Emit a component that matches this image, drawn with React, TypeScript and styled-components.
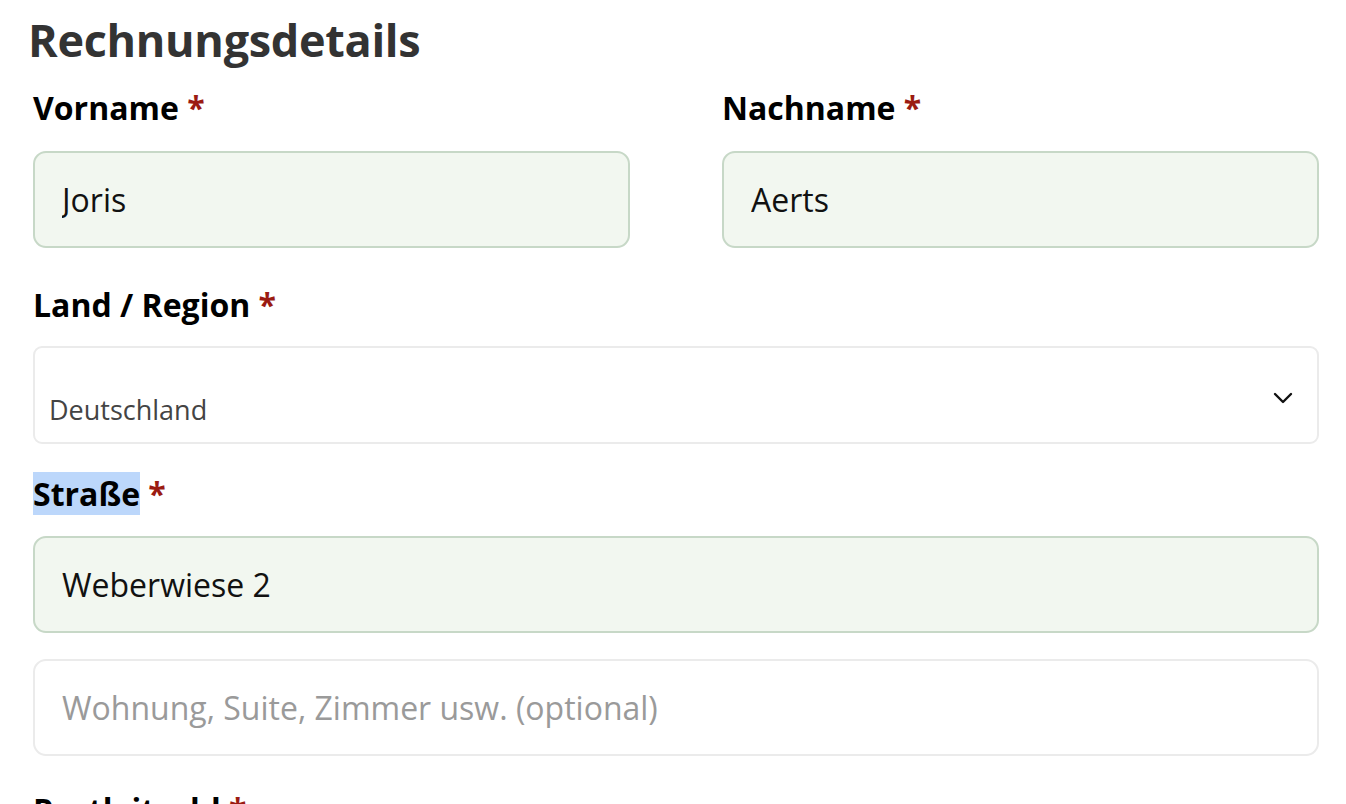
import styled, { createGlobalStyle } from "styled-components";

const GlobalStyle = createGlobalStyle`
    body {
        margin: 0;
        background: #ffffff;
        font-family: "Open Sans", "Noto Sans", sans-serif;
    }
`

const Field = ({ label, space = 0, gap = 21, children }: { label: string; space?: number; gap?: number; children: React.ReactNode }) => (
    <FieldBlock $space={space} $gap={gap}>
        <Label>
            {label} <Required>*</Required>
        </Label>
        {children}
    </FieldBlock>
)

export default function App() {
    return (
        <Page>
            <GlobalStyle />
            <Title>Rechnungsdetails</Title>
            <Row>
                <Field label="Vorname">
                    <TextInput $filled readOnly defaultValue="Joris" />
                </Field>
                <Field label="Nachname">
                    <TextInput $filled readOnly defaultValue="Aerts" />
                </Field>
            </Row>
            <Field label="Land / Region" space={28} gap={19}>
                <SelectBox>
                    <SelectValue>Deutschland</SelectValue>
                    <svg width="20" height="12" viewBox="0 0 20 12" fill="none">
                        <path d="M2 2l8 8 8-8" stroke="#111" strokeWidth="2.4" strokeLinecap="round" strokeLinejoin="round" />
                    </svg>
                </SelectBox>
            </Field>
            <StreetBlock>
                <Label>
                    <Selected>Straße</Selected> <Required>*</Required>
                </Label>
                <TextInput $filled readOnly defaultValue="Weberwiese 2" />
                <TextInput placeholder="Wohnung, Suite, Zimmer usw. (optional)" />
            </StreetBlock>
            <Field label="Postleitzahl">
                <TextInput />
            </Field>
        </Page>
    )
}

const Page = styled.div`
    width: 1286px;
    padding: 9px 0 0 33px;
    display: flex;
    flex-direction: column;
`
const Title = styled.h1`
    margin: 0 0 16px -5px;
    font-weight: 700;
    font-size: 45px;
    line-height: 61px;
    letter-spacing: -0.3px;
    color: #333333;
`
const Row = styled.div`
    display: grid;
    grid-template-columns: 1fr 1fr;
    column-gap: 92px;
    margin-bottom: 35px;
`
const FieldBlock = styled.div<{ $space: number; $gap: number }>`
    display: flex;
    flex-direction: column;
    gap: ${p => p.$gap}px;
    margin-bottom: ${p => p.$space}px;
`
const StreetBlock = styled.div`
    display: flex;
    flex-direction: column;
    gap: 20px;
    margin-bottom: 32px;
    & > input + input {
        margin-top: 6px;
    }
`
const Label = styled.label`
    font-weight: 700;
    font-size: 32px;
    line-height: 44px;
    color: #000000;
`
const Required = styled.span`
    color: #9b1b12;
`
const Selected = styled.span`
    background: #bcd7fb;
`
const TextInput = styled.input<{ $filled?: boolean }>`
    box-sizing: border-box;
    width: 100%;
    height: 97px;
    padding: 0 27px;
    border-radius: 13px;
    border: 2px solid ${p => (p.$filled ? "#c7d8c7" : "#ebebeb")};
    background: ${p => (p.$filled ? "#f2f7f0" : "#ffffff")};
    font-family: "Open Sans", sans-serif;
    font-size: 32px;
    color: #111111;
    outline: none;
    &::placeholder {
        color: #9a9a9a;
    }
`
const SelectBox = styled.div`
    box-sizing: border-box;
    height: 98px;
    padding: 28px 24px 0 14px;
    display: flex;
    align-items: center;
    justify-content: space-between;
    border: 2px solid #ebebeb;
    border-radius: 9px;
    background: #ffffff;
    svg {
        margin-top: -22px;
    }
`
const SelectValue = styled.span`
    font-size: 27px;
    color: #444444;
`
